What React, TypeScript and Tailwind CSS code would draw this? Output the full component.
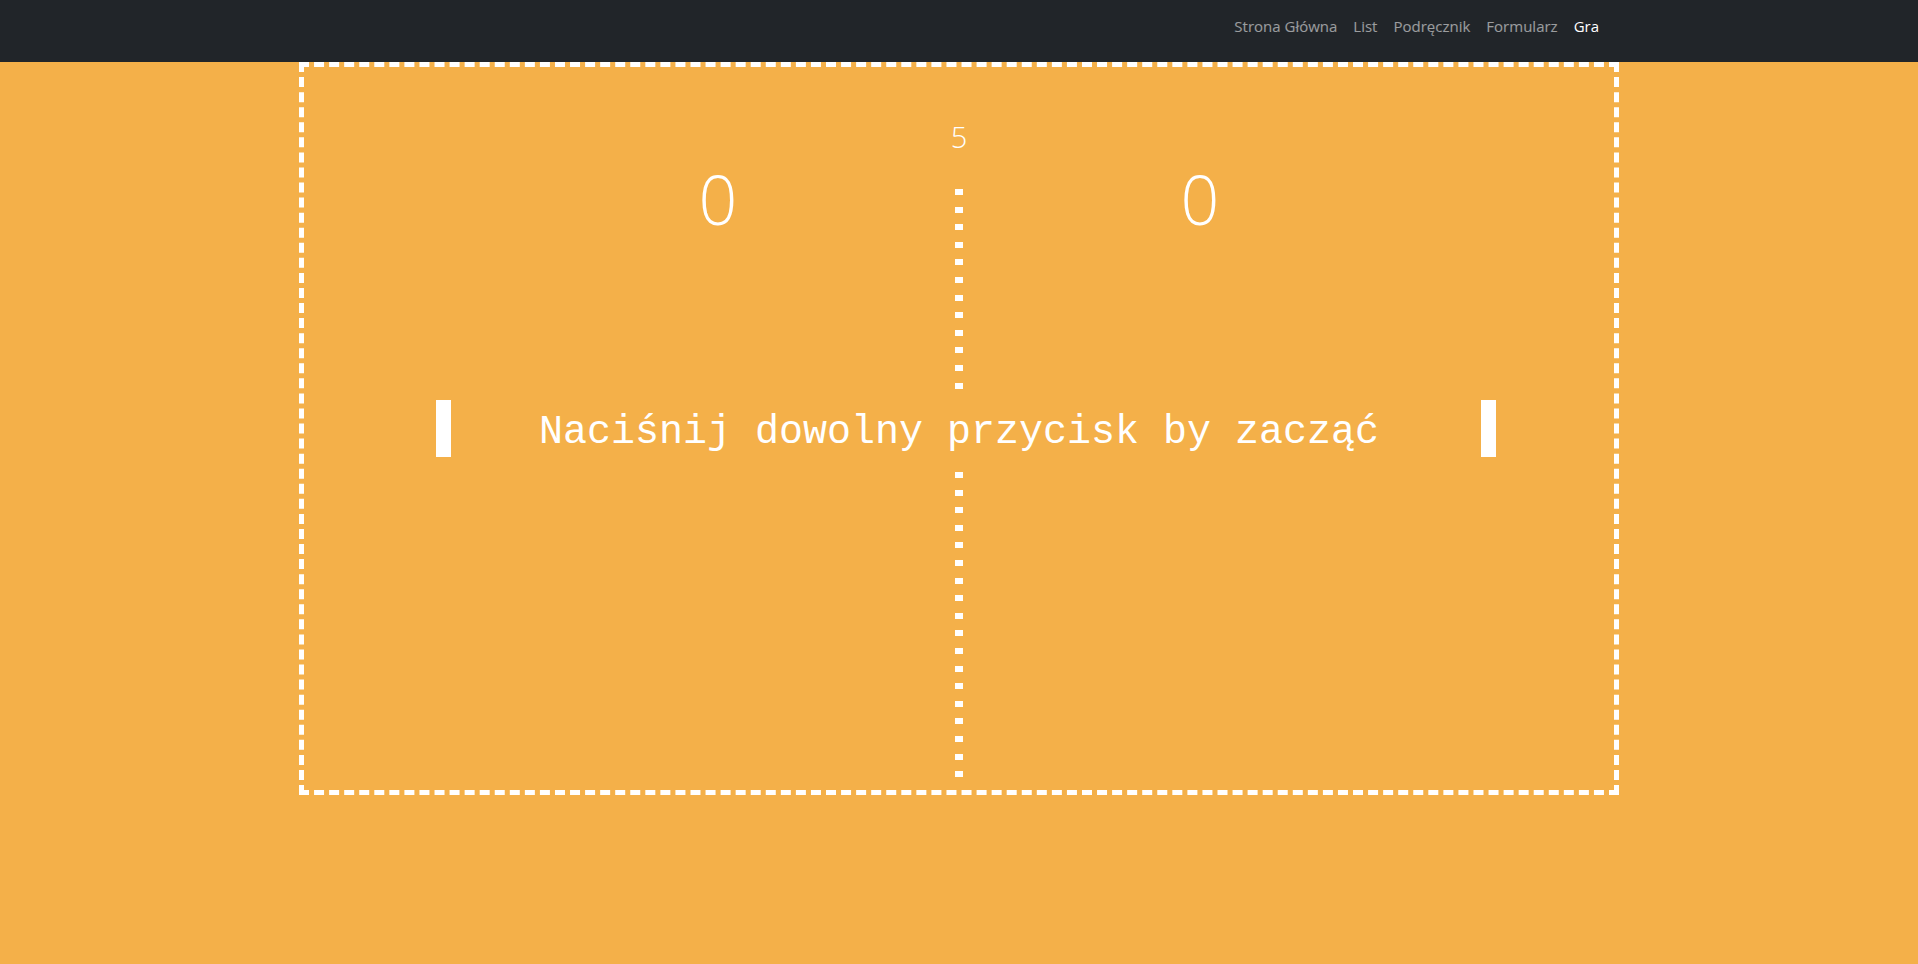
import React from 'react';

const links = ['Strona Główna', 'List', 'Podręcznik', 'Formularz', 'Gra'];

// one column of net dashes
const Dashes = ({ count }: { count: number }) => (
  <div className="flex flex-col gap-[11.6px]">
    {Array.from({ length: count }).map((_, i) => (
      <div key={i} className="w-[8px] h-[6px] bg-white" />
    ))}
  </div>
);

const App: React.FC = () => {
  return (
    <div className="min-h-[964px] bg-[#f4b049] flex flex-col">
      {/* navbar */}
      <nav className="h-[62px] bg-[#212529]">
        <div className="w-[1320px] mx-auto h-full px-[12px] pt-[15px] flex items-start justify-end">
          <ul className="flex" style={{ fontFamily: '"Open Sans", sans-serif' }}>
            {links.map(link => (
              <li
                key={link}
                className={`px-2 text-[15px] leading-[22px] ${link === 'Gra' ? 'text-white' : 'text-white/55'}`}
              >
                {link}
              </li>
            ))}
          </ul>
        </div>
      </nav>

      {/* game board */}
      <div className="w-[1320px] h-[733px] mx-auto border-[5px] border-dashed border-white relative">
        <div
          className="absolute left-[655px] top-[55px] -translate-x-1/2 text-[29px] leading-none text-white font-light"
          style={{ fontFamily: '"Open Sans", sans-serif' }}
        >
          5
        </div>
        <div
          className="absolute left-[414px] top-[98px] -translate-x-1/2 text-[68px] leading-none text-white font-light"
          style={{ fontFamily: '"Open Sans", sans-serif' }}
        >
          0
        </div>
        <div
          className="absolute left-[896px] top-[98px] -translate-x-1/2 text-[68px] leading-none text-white font-light"
          style={{ fontFamily: '"Open Sans", sans-serif' }}
        >
          0
        </div>

        {/* center net */}
        <div className="absolute left-[651px] top-[122px]">
          <Dashes count={12} />
        </div>
        <div className="absolute left-[651px] top-[405px]">
          <Dashes count={18} />
        </div>

        {/* paddles */}
        <div className="absolute left-[132px] top-[333px] w-[15px] h-[57px] bg-white" />
        <div className="absolute left-[1177px] top-[333px] w-[15px] h-[57px] bg-white" />

        <div
          className="absolute left-0 right-0 top-[346px] text-center text-[40px] leading-none text-white whitespace-nowrap"
          style={{ fontFamily: '"Liberation Mono", monospace' }}
        >
          Naciśnij dowolny przycisk by zacząć
        </div>
      </div>
    </div>
  );
};

export default App;
